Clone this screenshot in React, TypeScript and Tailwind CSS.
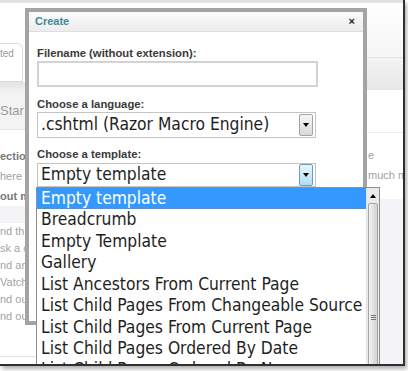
import React from "react";

const TEMPLATES = [
  "Empty template",
  "Breadcrumb",
  "Empty Template",
  "Gallery",
  "List Ancestors From Current Page",
  "List Child Pages From Changeable Source",
  "List Child Pages From Current Page",
  "List Child Pages Ordered By Date",
  "List Child Pages Ordered By Name",
  "List Descendants From Current Page",
];

function DropButton({ active }: { active?: boolean }) {
  return (
    <div
      className={`w-[14px] h-[22px] mr-[2px] flex items-center justify-center rounded-[2px] border ${
        active
          ? "border-[#6a9dc0] bg-gradient-to-b from-[#e8f5fd] to-[#b3dcf5]"
          : "border-[#a3a3a3] bg-gradient-to-b from-[#f6f6f6] to-[#d9d9d9]"
      }`}
    >
      <div className="w-0 h-0 border-l-[3px] border-r-[3px] border-t-[4px] border-l-transparent border-r-transparent border-t-black" />
    </div>
  );
}

function Select({ value, active, h }: { value: string; active?: boolean; h: string }) {
  return (
    <div className={`w-[279px] ${h} flex items-center border border-[#c4c4c4] bg-white`}>
      <span className="flex-1 pl-[3px] text-[17.3px] leading-none text-[#1e1e1e] font-['DejaVu_Sans_Condensed','DejaVu_Sans',sans-serif] whitespace-nowrap overflow-hidden">
        {value}
      </span>
      <DropButton active={active} />
    </div>
  );
}

function Background() {
  const left = ["nd th", "sk a c", "nd an", "Vatch", "nd ou", "nd out s"];
  return (
    <div className="flex flex-col w-full h-full font-['Liberation_Sans',Arial,sans-serif]">
      <div className="h-[3px] bg-[#e2e2e2]" />
      <div className="flex flex-1">
        {/* left strip */}
        <div className="w-[36px] flex flex-col overflow-hidden">
          <div className="h-[40px]" />
          <div className="h-[39px] w-[23px] border-t border-r border-b border-[#dadada] rounded-tr-[6px] pt-[4px] text-[10px] text-[#9a9a9a] leading-[12px]">
            ted
          </div>
          <div className="h-[11px] bg-gradient-to-b from-[#e4e4e4] to-[#f2f2f2]" />
          <div className="h-[37px] bg-[#f3f3f3] border-b border-[#e2e2e2] flex items-center text-[13px] text-[#9a9a9a]">
            Star
          </div>
          <div className="flex flex-col pt-[16px] text-[11px] leading-[20px] whitespace-nowrap">
            <span className="font-bold text-[#777]">ectio</span>
            <span className="text-[#a0a0a0]">here y</span>
            <span className="font-bold text-[#777]">out m</span>
          </div>
          <div className="h-[17px] bg-[#f4f4f7]" />
          <div className="flex flex-col text-[11px] leading-[17px] text-[#a3a3a3] whitespace-nowrap">
            {left.map((t) => (
              <span key={t}>{t}</span>
            ))}
          </div>
          <div className="h-[31px]" />
          <div className="h-px bg-[#e4e4e4]" />
        </div>
        {/* middle (under the dialog) */}
        <div className="flex-1" />
        {/* right strip */}
        <div className="w-[38px] flex flex-col overflow-hidden">
          <div className="h-[55px] bg-gradient-to-b from-white to-[#f6f6f6] border-b border-[#e3e3e3]" />
          <div className="h-[32px] bg-gradient-to-b from-[#f4f4f4] to-[#e7e7e7]" />
          <div className="h-[43px] border-b border-[#ececec]" />
          <div className="flex flex-col pt-[12px] pl-[3px] text-[11px] leading-[20px] text-[#a0a0a0] whitespace-nowrap">
            <span>e</span>
            <span>much m</span>
          </div>
          <div className="flex-1 mt-[14px] bg-[#f4f4f8]" />
        </div>
      </div>
    </div>
  );
}

export default function App() {
  return (
    <div className="w-[408px] h-[371px] bg-white">
      <div className="relative w-[405px] h-[366px] overflow-hidden bg-white border-r-2 border-b-2 border-[#2f2f2f] shadow-[2px_3px_4px_rgba(0,0,0,0.3)]">
        <Background />

        {/* dialog */}
        <div className="absolute left-[25px] top-[8px] w-[342px] h-[317px] border-4 border-[#a4a4a4] bg-white font-['Liberation_Sans',Arial,sans-serif]">
          <div className="h-[20px] flex items-center justify-between pl-[6px] pr-[8px] border-b border-[#dedede] bg-gradient-to-b from-[#fbfbfb] to-[#ededed]">
            <span className="text-[11px] font-bold text-[#3f8896]">Create</span>
            <span className="text-[11px] font-bold text-[#222] leading-none">×</span>
          </div>
          <div className="flex flex-col px-[8px] pt-[15px]">
            <label className="text-[11.3px] leading-[12px] font-bold text-[#3a3a3a]">Filename (without extension):</label>
            <div className="mt-[2px] w-[281px] h-[26px] border-2 border-[#d3d3d3] bg-white" />
            <label className="mt-[11px] text-[11.3px] leading-[12px] font-bold text-[#3a3a3a]">Choose a language:</label>
            <div className="mt-[2px]">
              <Select value=".cshtml (Razor Macro Engine)" h="h-[26px]" />
            </div>
            <label className="mt-[10px] text-[11.3px] leading-[12px] font-bold text-[#3a3a3a]">Choose a template:</label>
            <div className="mt-[3px]">
              <Select value="Empty template" h="h-[24px]" active />
            </div>
          </div>
        </div>

        {/* open dropdown list */}
        <div className="absolute left-[36px] top-[187px] w-[344px] h-[200px] flex border border-[#8e8e8e] bg-white font-['DejaVu_Sans_Condensed','DejaVu_Sans',sans-serif]">
          <div className="flex-1 flex flex-col overflow-hidden">
            {TEMPLATES.map((t, i) => (
              <div
                key={t}
                className={`shrink-0 h-[21.43px] flex items-center pl-[4px] text-[17.3px] leading-none whitespace-nowrap ${
                  i === 0 ? "bg-[#3399ff] text-white" : "text-[#1e1e1e]"
                }`}
              >
                {t}
              </div>
            ))}
          </div>
          <div className="w-[13px] flex flex-col bg-[#ececec] border-l border-[#e2e2e2]">
            <div className="h-[15px] flex items-center justify-center">
              <div className="w-0 h-0 border-l-[3px] border-r-[3px] border-b-[4px] border-l-transparent border-r-transparent border-b-black" />
            </div>
            <div className="flex-1 mx-px rounded-[2px] border border-[#a6a6a6] bg-gradient-to-r from-[#f3f3f3] to-[#d2d2d2] flex flex-col items-center pt-[111px] gap-[1px]">
              <div className="w-[5px] h-px bg-[#777]" />
              <div className="w-[5px] h-px bg-[#777]" />
              <div className="w-[5px] h-px bg-[#777]" />
            </div>
          </div>
        </div>
      </div>
    </div>
  );
}
